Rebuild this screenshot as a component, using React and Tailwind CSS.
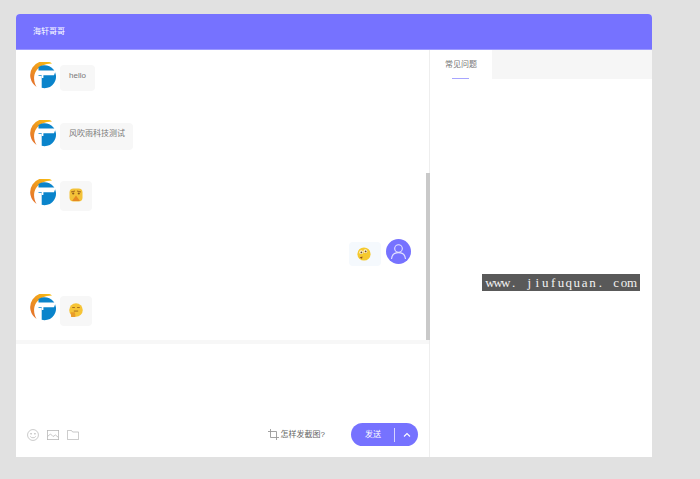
function BrandAvatar() {
  return (
    <svg width="28" height="28" viewBox="0 0 28 28" className="shrink-0">
      <defs>
        <linearGradient id="arc" x1="0" y1="1" x2="0.8" y2="0">
          <stop offset="0" stopColor="#e2692e" />
          <stop offset="1" stopColor="#f8bb14" />
        </linearGradient>
      </defs>
      <path d="M22 1.4A13.2 13.2 0 0 0 6.6 25C3.6 20 3.2 14 5.8 9.5 8.6 4.6 15 1.4 22 1.4Z" fill="url(#arc)" />
      <path d="M8.5 14V4.9A11.5 11.5 0 1 1 11.7 25.85V14Z" fill="#0a84cb" />
      <path d="M8 8.6H25.8L24 13.2H13.4V16H11.7V13.2H8Z" fill="#fff" />
    </svg>
  );
}

function UserAvatar() {
  return (
    <div className="w-[25px] h-[25px] rounded-full bg-[#7672ff] flex items-center justify-center shrink-0">
      <svg width="17" height="17" viewBox="0 0 17 17" fill="none" stroke="#e4e3ff" strokeWidth="1.1">
        <circle cx="8.5" cy="5.5" r="3.8" />
        <path d="M1.5 16C1.8 12 4.5 9.6 8.5 9.6S15.2 12 15.5 16" />
      </svg>
    </div>
  );
}

// the three little emoji stickers
function EmojiWorried() {
  return (
    <svg width="14" height="14" viewBox="0 0 14 14" className="mt-[-2px]">
      <rect x="0.5" y="0.5" width="13" height="13" rx="4" fill="#f3c238" />
      <path d="M2 4L6 3M12 4L8 3" stroke="#a4681c" strokeWidth="1" />
      <circle cx="4.2" cy="5.5" r="1.1" fill="#8d5a1e" />
      <circle cx="9.8" cy="5.5" r="1.1" fill="#8d5a1e" />
      <path d="M3 13L7 7.5L11 13Z" fill="#e58a22" />
    </svg>
  );
}

function EmojiThink() {
  return (
    <svg width="14" height="14" viewBox="0 0 14 14" className="ml-[-3px]">
      <circle cx="7" cy="7" r="6.6" fill="#f5c92f" />
      <circle cx="4.2" cy="5.2" r="1.9" fill="#fff3cf" />
      <circle cx="8.4" cy="4.2" r="1.9" fill="#fff3cf" />
      <circle cx="4.4" cy="5.4" r="0.9" fill="#6e4a22" />
      <circle cx="8.6" cy="4.4" r="0.9" fill="#6e4a22" />
      <path d="M2.5 10.5L5.5 9.5L5 11.8Z" fill="#8b4a22" />
    </svg>
  );
}

function EmojiHand() {
  return (
    <svg width="14" height="14" viewBox="0 0 13 13" className="mt-[-3px]">
      <circle cx="6.5" cy="6.5" r="6.3" fill="#f6c436" />
      <path d="M3 4.2H5.5M7.5 4.2H10" stroke="#a66c20" strokeWidth="0.9" />
      <path d="M4.5 7.5H8.5" stroke="#a66c20" strokeWidth="0.9" />
      <path d="M1.5 8.5H5.5L6 13H2Z" fill="#e99c2a" />
    </svg>
  );
}

function Bubble({ className, children }) {
  return (
    <div className={`bg-[#f7f7f7] rounded-[4px] flex ${className}`}>{children}</div>
  );
}

function ToolIcons() {
  return (
    <div className="flex items-center gap-[8px] text-[#b9b9b9]">
      <svg width="12" height="12" viewBox="0 0 13 13" fill="none" stroke="currentColor" strokeWidth="0.8">
        <circle cx="6.5" cy="6.5" r="5.9" />
        <circle cx="4.4" cy="5.2" r="0.5" fill="currentColor" />
        <circle cx="8.6" cy="5.2" r="0.5" fill="currentColor" />
        <path d="M3.5 8C4.5 10 8.5 10 9.5 8" />
      </svg>
      <svg width="12" height="10" viewBox="0 0 12 10" fill="none" stroke="currentColor" strokeWidth="0.8">
        <rect x="0.4" y="0.4" width="11.2" height="9.2" />
        <path d="M0.5 6.5L3.5 4L6 6.5L8.5 5L11.5 7.5" />
      </svg>
      <svg width="12" height="10" viewBox="0 0 12 10" fill="none" stroke="currentColor" strokeWidth="0.8">
        <path d="M0.4 9.6V0.4H4.4L5.6 2H11.6V9.6Z" />
      </svg>
    </div>
  );
}

const watermark = "www. jiufuquan. com".split("");

export default function App() {
  return (
    <div className="relative w-[700px] h-[479px] bg-[#e1e1e1] pt-[14px] pl-[16px] overflow-hidden">
      <div className="w-[636px] h-[443px] bg-white rounded-t-[4px] flex flex-col font-['Liberation_Sans','Noto_Sans_CJK_SC',sans-serif]">
        <div className="h-[36px] shrink-0 bg-[#7672ff] rounded-t-[4px] border-b border-[#9c99ff] pl-[17px] flex items-center text-[8px] text-white">
          海轩哥哥
        </div>

        <div className="flex flex-1 min-h-0">
          {/* chat column */}
          <div className="w-[414px] shrink-0 flex flex-col">
            <div className="h-[290px] relative pl-[14px] pr-[19px] pt-[12px] overflow-hidden">
              <div className="flex gap-[2px]">
                <BrandAvatar />
                <Bubble className="mt-[3px] w-[35px] h-[26px] pl-[9px] pt-[5px] text-[8px] text-[#777]">hello</Bubble>
              </div>
              <div className="flex gap-[2px] mt-[29px]">
                <BrandAvatar />
                <Bubble className="mt-[3px] w-[73px] h-[27px] pl-[9px] pt-[5px] text-[8px] text-[#777]">风吹雨科技测试</Bubble>
              </div>
              <div className="flex gap-[2px] mt-[29px]">
                <BrandAvatar />
                <Bubble className="mt-[2px] w-[32px] h-[30px] items-center justify-center"><EmojiWorried /></Bubble>
              </div>
              <div className="flex justify-end gap-[5px] mt-[28px]">
                <div className="mt-[3px] w-[32px] h-[24px] bg-[#f5f9fd] rounded-[4px] flex items-center justify-center"><EmojiThink /></div>
                <UserAvatar />
              </div>
              <div className="flex gap-[2px] mt-[28px]">
                <BrandAvatar />
                <Bubble className="mt-[2px] w-[32px] h-[30px] items-center justify-center"><EmojiHand /></Bubble>
              </div>
              {/* scrollbar thumb */}
              <div className="absolute right-0 top-[123px] w-[4px] h-[167px] bg-[#c9c9c9]" />
            </div>

            <div className="h-[4px] shrink-0 bg-[#f7f7f7]" />

            <div className="flex-1 flex flex-col justify-end pl-[11px] pr-[12px] pb-[11px]">
              <div className="flex items-center">
                <ToolIcons />
                <div className="ml-auto flex items-center gap-[2px] text-[8px] text-[#666]">
                  <svg width="11" height="11" viewBox="0 0 11 11" fill="none" stroke="#999" strokeWidth="0.9">
                    <path d="M2.5 0V8.5H11M0 2.5H8.5V11" />
                  </svg>
                  怎样发截图?
                </div>
                <div className="ml-[26px] w-[67px] h-[23px] rounded-full bg-[#7672ff] flex items-center text-[8px] text-white">
                  <span className="pl-[14px] w-[43px]">发送</span>
                  <span className="w-px h-[14px] bg-[#d6d5ff]" />
                  <svg width="8" height="6" viewBox="0 0 8 6" fill="none" stroke="#fff" strokeWidth="1.1" className="ml-[8px]">
                    <path d="M1 4.5L4 1.5L7 4.5" />
                  </svg>
                </div>
              </div>
            </div>
          </div>

          {/* faq column */}
          <div className="flex-1 -ml-px border-l border-[#eeeeee]">
            <div className="h-[29px] bg-[#f6f6f6] flex">
              <div className="w-[62px] h-full bg-white relative text-[8px] text-[#777] flex justify-center pt-[9px]">
                常见问题
                <div className="absolute left-[22px] bottom-0 w-[17px] h-px bg-[#a7a5ff]" />
              </div>
            </div>
          </div>
        </div>
      </div>

      {/* watermark, fixed width cells like the SimSun one in the shot */}
      <div className="absolute left-[482px] top-[274px] w-[158px] h-[17px] bg-[#595959] text-[#f2f2f2] text-[13px] leading-[17px] pl-[4px] flex font-['Liberation_Serif',serif]">
        {watermark.map((ch, i) => (
          <span key={i} className="w-[7.9px] shrink-0 flex justify-center whitespace-pre">{ch}</span>
        ))}
      </div>
    </div>
  );
}
